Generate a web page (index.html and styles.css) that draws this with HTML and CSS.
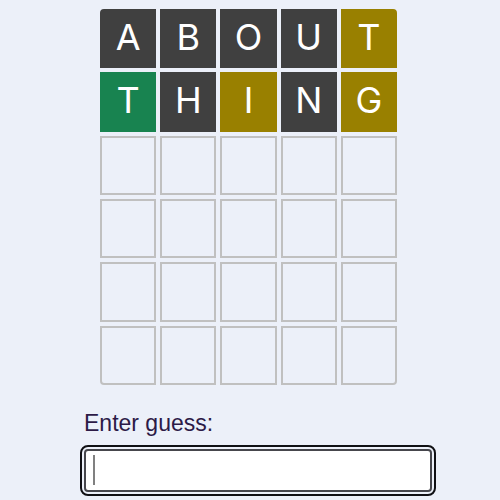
FILE: index.html
```
<!DOCTYPE html>
<html lang="en">
<head>
<meta charset="utf-8">
<title>Word game</title>
<link rel="stylesheet" href="styles.css">
</head>
<body>
<main class="game">
  <section class="board" aria-label="Guesses">
    <div class="cell absent">A</div><div class="cell absent">B</div><div class="cell absent">O</div><div class="cell absent">U</div><div class="cell present">T</div>
    <div class="cell correct">T</div><div class="cell absent">H</div><div class="cell present">I</div><div class="cell absent">N</div><div class="cell present">G</div>
    <div class="cell"></div><div class="cell"></div><div class="cell"></div><div class="cell"></div><div class="cell"></div>
    <div class="cell"></div><div class="cell"></div><div class="cell"></div><div class="cell"></div><div class="cell"></div>
    <div class="cell"></div><div class="cell"></div><div class="cell"></div><div class="cell"></div><div class="cell"></div>
    <div class="cell"></div><div class="cell"></div><div class="cell"></div><div class="cell"></div><div class="cell"></div>
  </section>
  <form class="entry">
    <label class="entry-label" for="guess">Enter guess:</label>
    <div class="field">
      <input class="guess" id="guess" type="text" autocomplete="off">
      <span class="caret"></span>
    </div>
  </form>
</main>
</body>
</html>
```
FILE: styles.css
```
* {
  box-sizing: border-box;
}

body {
  margin: 0;
  padding-left: 16px;
  background: #ecf0f9;
  color: #2c1a47;
  font-family: "Liberation Sans", Arial, sans-serif;
}

.game {
  max-width: 348px;
  margin: 0 auto;
  padding: 9px 0 8px;
}

.board {
  display: grid;
  grid-template-columns: repeat(5, 1fr);
  grid-template-rows: repeat(6, 1fr);
  gap: 4px;
  aspect-ratio: 297 / 376;
  margin: 0 35px 0 16px;
}

.cell {
  display: flex;
  align-items: center;
  justify-content: center;
  padding-bottom: 4px;
  border: 2px solid #c0c0c0;
  color: #fff;
  font-family: Inter, "Liberation Sans", sans-serif;
  font-size: 36px;
  line-height: 1;
}

.cell:first-child {
  border-top-left-radius: 4px;
}

.cell:nth-child(5) {
  border-top-right-radius: 4px;
}

.cell:nth-child(26) {
  border-bottom-left-radius: 4px;
}

.cell:last-child {
  border-bottom-right-radius: 4px;
}

.absent {
  background: #404040;
  border-color: #404040;
}

.present {
  background: #998000;
  border-color: #998000;
}

.correct {
  background: #188350;
  border-color: #188350;
}

.entry-label {
  display: block;
  margin: 24px 0 12px;
  font-size: 23px;
  line-height: 28px;
}

.field {
  position: relative;
}

.guess {
  display: block;
  width: 100%;
  height: 43px;
  padding: 0 8px;
  border: 2px solid #46464c;
  border-radius: 4px;
  outline: 2px solid #101014;
  outline-offset: 2px;
  background: #fff;
  color: inherit;
  font: inherit;
  font-size: 23px;
}

.caret {
  position: absolute;
  top: 6px;
  bottom: 7px;
  left: 9px;
  width: 2px;
  background: #808080;
}
```
